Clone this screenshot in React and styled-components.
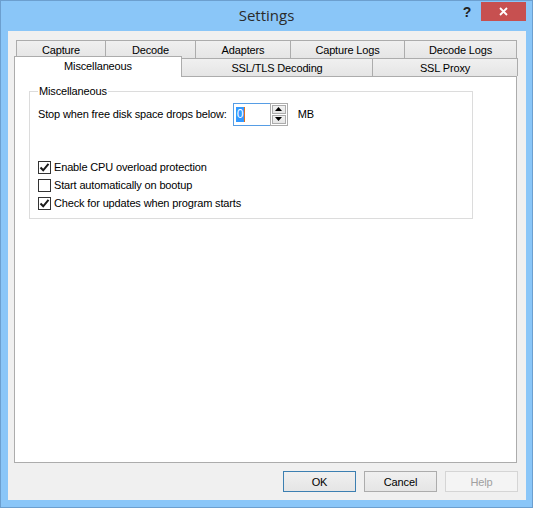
import React from "react";
import styled, { createGlobalStyle } from "styled-components";

const GlobalStyle = createGlobalStyle`
  html, body { margin: 0; padding: 0; background: #ffffff; }
  * { box-sizing: border-box; }
`;

const FONT = `"Liberation Sans", Arial, sans-serif`;

const Window = styled.div`
  width: 533px;
  height: 508px;
  background: #8ac6f8;
  border: 1px solid #6c9fcf;
  display: flex;
  flex-direction: column;
  padding: 0 6px 7px 7px;
  font-family: ${FONT};
  font-size: 11px;
  letter-spacing: -0.15px;
  color: #000;
`;

const TitleBar = styled.div`
  height: 30px;
  display: grid;
  grid-template-columns: 1fr auto 1fr;
  align-items: start;
  margin: 0 -6px 0 -7px;
`;

const Title = styled.div`
  grid-column: 2;
  font-family: "Open Sans", sans-serif;
  font-size: 15px;
  letter-spacing: 0;
  line-height: 28px;
  color: #2b2b2b;
`;

const Controls = styled.div`
  grid-column: 3;
  justify-self: end;
  display: flex;
  align-items: flex-start;
  padding-right: 6px;
`;

const HelpGlyph = styled.div`
  width: 20px;
  margin-right: 4px;
  text-align: center;
  font-weight: bold;
  font-size: 14px;
  line-height: 22px;
  color: #222;
`;

const CloseButton = styled.div`
  width: 45px;
  height: 19px;
  margin-top: 1px;
  background: #c75050;
  display: flex;
  align-items: center;
  justify-content: center;
`;

const Client = styled.div`
  flex: 1;
  background: #f0f0f0;
  display: flex;
  flex-direction: column;
  padding: 9px 9px 8px 6px;
`;

const TabRow = styled.div`
  display: flex;
  height: 18px;
  padding-left: ${p => p.$indent || 0}px;
  position: relative;
  z-index: ${p => p.$front ? 2 : 1};
`;

const Tab = styled.div`
  width: ${p => p.$w}px;
  flex: none;
  height: ${p => p.$active ? 21 : 18}px;
  margin-top: ${p => p.$active ? -2 : 0}px;
  margin-right: -1px;
  border: 1px solid #acacac;
  border-bottom: none;
  background: ${p => p.$active ? "#ffffff" : "linear-gradient(#f0f0f0, #e5e5e5)"};
  display: flex;
  align-items: center;
  justify-content: center;
  line-height: 1;
  padding-top: 1px;
  padding-bottom: ${p => p.$active ? 3 : 0}px;
  position: relative;
  z-index: ${p => p.$active ? 3 : 1};
`;

const Panel = styled.div`
  flex: 1;
  background: #ffffff;
  border: 1px solid #acacac;
  padding: 7px 43px 0 14px;
  position: relative;
  z-index: 1;
`;

const Group = styled.fieldset`
  margin: 0;
  border: 1px solid #dcdcdc;
  padding: 0 8px 6px 8px;
  min-width: 0;
`;

const GroupLabel = styled.legend`
  padding: 0 1px;
  margin-left: 0;
  line-height: 15px;
  color: #000;
`;

const FieldRow = styled.div`
  display: flex;
  align-items: center;
  margin-top: 3px;
  height: 24px;
`;

const FieldLabel = styled.span`
  margin-right: 6px;
`;

const Spin = styled.div`
  display: flex;
  height: 23px;
`;

const SpinInput = styled.div`
  width: 37px;
  border: 1px solid #569de5;
  border-right: none;
  background: #fff;
  display: flex;
  align-items: center;
  padding-left: 2px;
`;

const Selected = styled.span`
  background: #3399ff;
  color: #fff;
  font-size: 12px;
  line-height: 15px;
  padding: 0 1px;
  border-right: 1px solid #e07020;
`;

const SpinButtons = styled.div`
  width: 18px;
  border: 1px solid #acacac;
  background: #fff;
  display: flex;
  flex-direction: column;
  gap: 1px;
  padding: 1px;
`;

const SpinBtn = styled.div`
  flex: 1;
  border: 1px solid #acacac;
  background: linear-gradient(#f2f2f2, #e6e6e6);
  display: flex;
  align-items: center;
  justify-content: center;
`;

const Unit = styled.span`
  margin-left: 10px;
`;

const Checks = styled.div`
  margin-top: 32px;
  display: flex;
  flex-direction: column;
`;

const CheckRow = styled.label`
  display: flex;
  align-items: center;
  height: 18px;
`;

const Box = styled.span`
  width: 13px;
  height: 13px;
  border: 1px solid #333333;
  background: #fff;
  margin-right: 3px;
  display: flex;
  align-items: center;
  justify-content: center;
`;

const ButtonBar = styled.div`
  display: flex;
  justify-content: flex-end;
  gap: 8px;
  padding-top: 8px;
  margin-right: -1px;
`;

const Button = styled.div`
  width: 73px;
  height: 21px;
  border: 1px solid ${p => p.$default ? "#3c7fb1" : p.$disabled ? "#d5d5d5" : "#acacac"};
  background: ${p => p.$disabled ? "#f4f4f4" : "linear-gradient(#f0f0f0, #e5e5e5)"};
  color: ${p => p.$disabled ? "#a0a0a0" : "#000"};
  display: flex;
  align-items: center;
  justify-content: center;
`;

const Arrow = ({ up }) => (
  <svg width="7" height="4" viewBox="0 0 7 4">
    <path d={up ? "M0 4 L3.5 0 L7 4 Z" : "M0 0 L3.5 4 L7 0 Z"} fill="#000" />
  </svg>
);

const Check = () => (
  <svg width="11" height="11" viewBox="0 0 11 11">
    <path d="M1.5 5.5 L4.2 8.3 L9.5 1.8" fill="none" stroke="#1a1a1a" strokeWidth="2" />
  </svg>
);

const backTabs = [
  ["Capture", 90],
  ["Decode", 91],
  ["Adapters", 96],
  ["Capture Logs", 115],
  ["Decode Logs", 113],
];

const frontTabs = [
  ["Miscellaneous", 168, true],
  ["SSL/TLS Decoding", 192],
  ["SSL Proxy", 146],
];

const options = [
  ["Enable CPU overload protection", true],
  ["Start automatically on bootup", false],
  ["Check for updates when program starts", true],
];

export default function App() {
  return (
    <>
      <GlobalStyle />
      <Window>
        <TitleBar>
          <Title>Settings</Title>
          <Controls>
            <HelpGlyph>?</HelpGlyph>
            <CloseButton>
              <svg width="9" height="9" viewBox="0 0 9 9">
                <path d="M1 1 L8 8 M8 1 L1 8" stroke="#fff" strokeWidth="1.8" />
              </svg>
            </CloseButton>
          </Controls>
        </TitleBar>
        <Client>
          <TabRow $indent={2}>
            {backTabs.map(([t, w]) => (
              <Tab key={t} $w={w}>{t}</Tab>
            ))}
          </TabRow>
          <TabRow $front $indent={0}>
            {frontTabs.map(([t, w, a]) => (
              <Tab key={t} $w={w} $active={a}>{t}</Tab>
            ))}
          </TabRow>
          <Panel>
            <Group>
              <GroupLabel>Miscellaneous</GroupLabel>
              <FieldRow>
                <FieldLabel>Stop when free disk space drops below:</FieldLabel>
                <Spin>
                  <SpinInput><Selected>0</Selected></SpinInput>
                  <SpinButtons>
                    <SpinBtn><Arrow up /></SpinBtn>
                    <SpinBtn><Arrow /></SpinBtn>
                  </SpinButtons>
                </Spin>
                <Unit>MB</Unit>
              </FieldRow>
              <Checks>
                {options.map(([t, c]) => (
                  <CheckRow key={t}>
                    <Box>{c && <Check />}</Box>
                    {t}
                  </CheckRow>
                ))}
              </Checks>
            </Group>
          </Panel>
          <ButtonBar>
            <Button $default>OK</Button>
            <Button>Cancel</Button>
            <Button $disabled>Help</Button>
          </ButtonBar>
        </Client>
      </Window>
    </>
  );
}
